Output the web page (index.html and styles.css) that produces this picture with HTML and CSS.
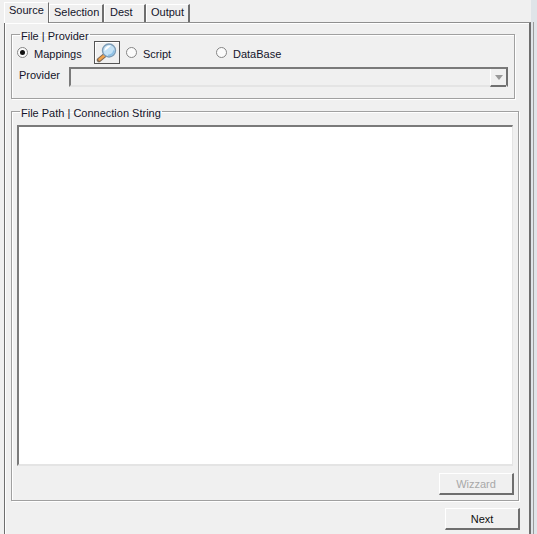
FILE: index.html
```html
<!DOCTYPE html>
<html>
<head>
	<meta charset="UTF-8">
	<title>Source</title>
	<link rel="stylesheet" href="styles.css">
</head>
<body>
	<div class="win">
		<div class="win-main">
			<div class="tabs">
				<a class="tab tab-on tab-source">Source</a>
				<a class="tab tab-selection">Selection</a>
				<a class="tab tab-dest">Dest</a>
				<a class="tab tab-output">Output</a>
			</div>
			<div class="page">
				<fieldset class="group group-provider">
					<legend>File | Provider</legend>
					<div class="opts">
						<label class="opt opt-map"><span class="radio radio-on"></span><span class="opt-text">Mappings</span></label>
						<button class="find" type="button">
							<svg width="22" height="20" viewBox="0 0 22 20">
								<path d="M9 12 L3 17" stroke="#7c6a58" stroke-width="4.4" stroke-linecap="round"/>
								<path d="M9 12 L3.5 16.5" stroke="#f2a24a" stroke-width="2.4" stroke-linecap="round"/>
								<circle cx="13" cy="7.5" r="6.5" fill="#c4e2f6" stroke="#7d9cb6" stroke-width="1.4"/>
								<path d="M8.5 8 C8.5 4.5 11 2.5 15 2.5 C13 4.5 11 6.5 8.5 8Z" fill="#fff"/>
								<path d="M12 12.5 C15 12.5 17.5 10.5 18 7.5" fill="none" stroke="#8cc0e6" stroke-width="1.6"/>
							</svg>
						</button>
						<label class="opt opt-script"><span class="radio"></span><span class="opt-text">Script</span></label>
						<label class="opt"><span class="radio"></span><span class="opt-text">DataBase</span></label>
					</div>
					<div class="prov-row">
						<span class="prov-label">Provider</span>
						<div class="combo"><span class="combo-btn"><i class="arrow"></i></span></div>
					</div>
				</fieldset>
				<fieldset class="group group-path">
					<legend>File Path | Connection String</legend>
					<div class="path-box"></div>
					<div class="wiz-row"><button class="btn btn-off" type="button">Wizzard</button></div>
				</fieldset>
				<div class="next-row"><button class="btn" type="button">Next</button></div>
			</div>
		</div>
		<div class="win-strip"></div>
	</div>
</body>
</html>
```

FILE: styles.css
```css
*{
	margin:0px;padding:0px;box-sizing:border-box;
}
html,body{
	height:100%;overflow:hidden;
}
body{
	background-color:#f0f0f0;color:#14142a;
	font-family:"Liberation Sans",Arial,sans-serif;font-size:11px;
}
.win{
	display:flex;height:534px;
}
.win-main{
	width:531px;display:flex;flex-direction:column;
}
.win-strip{
	flex:1;background-color:#dfe4e8;
}

/* tabs */
.tabs{
	display:flex;height:22px;padding:2px 0 0 4px;align-items:flex-end;
}
.tab{
	display:block;height:18px;line-height:15px;padding-left:4px;
	border-left:1px solid #fff;border-top:1px solid #fff;border-right:2px solid #6e6e6e;
}
.tab-on{
	height:21px;margin-bottom:-1px;position:relative;z-index:1;
	background-color:#f0f0f0;border-right-width:1px;
}
.tab-source{width:45px;}
.tab-selection{width:55px;}
.tab-dest{width:42px;padding-left:5px;}
.tab-output{width:44px;}

.page{
	flex:1;margin-left:4px;padding:11px 0 0 6px;
	border-top:1px solid #8f8f8f;border-left:1px solid #6e6e6e;
	border-right:2px solid #6e6e6e;box-shadow:inset 1px 1px 0 #fff;
	position:relative;
}
.page:after{
	content:"";display:block;width:1px;position:absolute;top:-1px;bottom:0;right:-5px;background-color:#9a9a9a;
}

/* groups */
.group{
	border:1px solid #a0a0a0;box-shadow:1px 1px 0 #fff,inset 1px 1px 0 #fff;
	padding:0 5px;min-width:0;
}
.group legend{
	margin-left:3px;padding:4px 1px 0;line-height:14px;
}
.group-provider{
	width:504px;height:74px;margin-top:-9px;
}
.group-path{
	width:508px;height:399px;margin-top:3px;
}
.opts{
	display:flex;align-items:center;height:23px;margin-top:-2px;
}
.opt{
	display:flex;align-items:center;gap:6px;
}
.opt-text{
	padding-top:3px;
}
.opt-map{width:77px;}
.opt-script{width:90px;margin-left:6px;}
.radio{
	display:block;width:11px;height:11px;border-radius:50%;background-color:#fbfbfb;
	border:1px solid #858585;position:relative;
}
.radio-on:after{
	content:"";position:absolute;left:2px;top:2px;width:5px;height:5px;border-radius:50%;background-color:#111;
}
.find{
	width:26px;height:23px;border:1px solid #555;background-color:#f0f0f0;
	box-shadow:inset 1px 1px 0 #fff;display:flex;align-items:center;justify-content:center;
}
.prov-row{
	display:flex;align-items:center;margin-top:3px;height:20px;
}
.prov-label{
	width:50px;margin-left:2px;padding-bottom:4px;
}
.combo{
	width:439px;height:20px;background-color:#f0f0f0;
	border:2px solid #7a7a7a;border-bottom-color:#e4e4e4;border-right-color:#707070;
	display:flex;justify-content:flex-end;
}
.combo-btn{
	width:16px;height:18px;border-left:1px solid #fff;border-bottom:2px solid #707070;
	display:flex;align-items:center;justify-content:center;
}
.arrow{
	width:0;height:0;border:4px solid transparent;border-top:5px solid #999;border-bottom:0;
}
.path-box{
	width:496px;height:341px;margin-top:5px;background-color:#fff;
	border-top:2px solid #7a7a7a;border-left:2px solid #7a7a7a;
	border-right:1px solid #e4e4e4;border-bottom:2px solid #e4e4e4;
}
.wiz-row{
	display:flex;justify-content:flex-end;margin-top:7px;width:497px;
}
.next-row{
	display:flex;justify-content:flex-end;margin-top:7px;width:509px;
}

/* buttons */
.btn{
	width:75px;height:22px;background-color:#f0f0f0;color:#111;
	font-family:"Liberation Sans",Arial,sans-serif;font-size:11px;
	border:1px solid #fff;border-right:2px solid #6e6e6e;border-bottom:2px solid #6e6e6e;
}
.btn-off{
	color:#a8a8a8;
}
```
